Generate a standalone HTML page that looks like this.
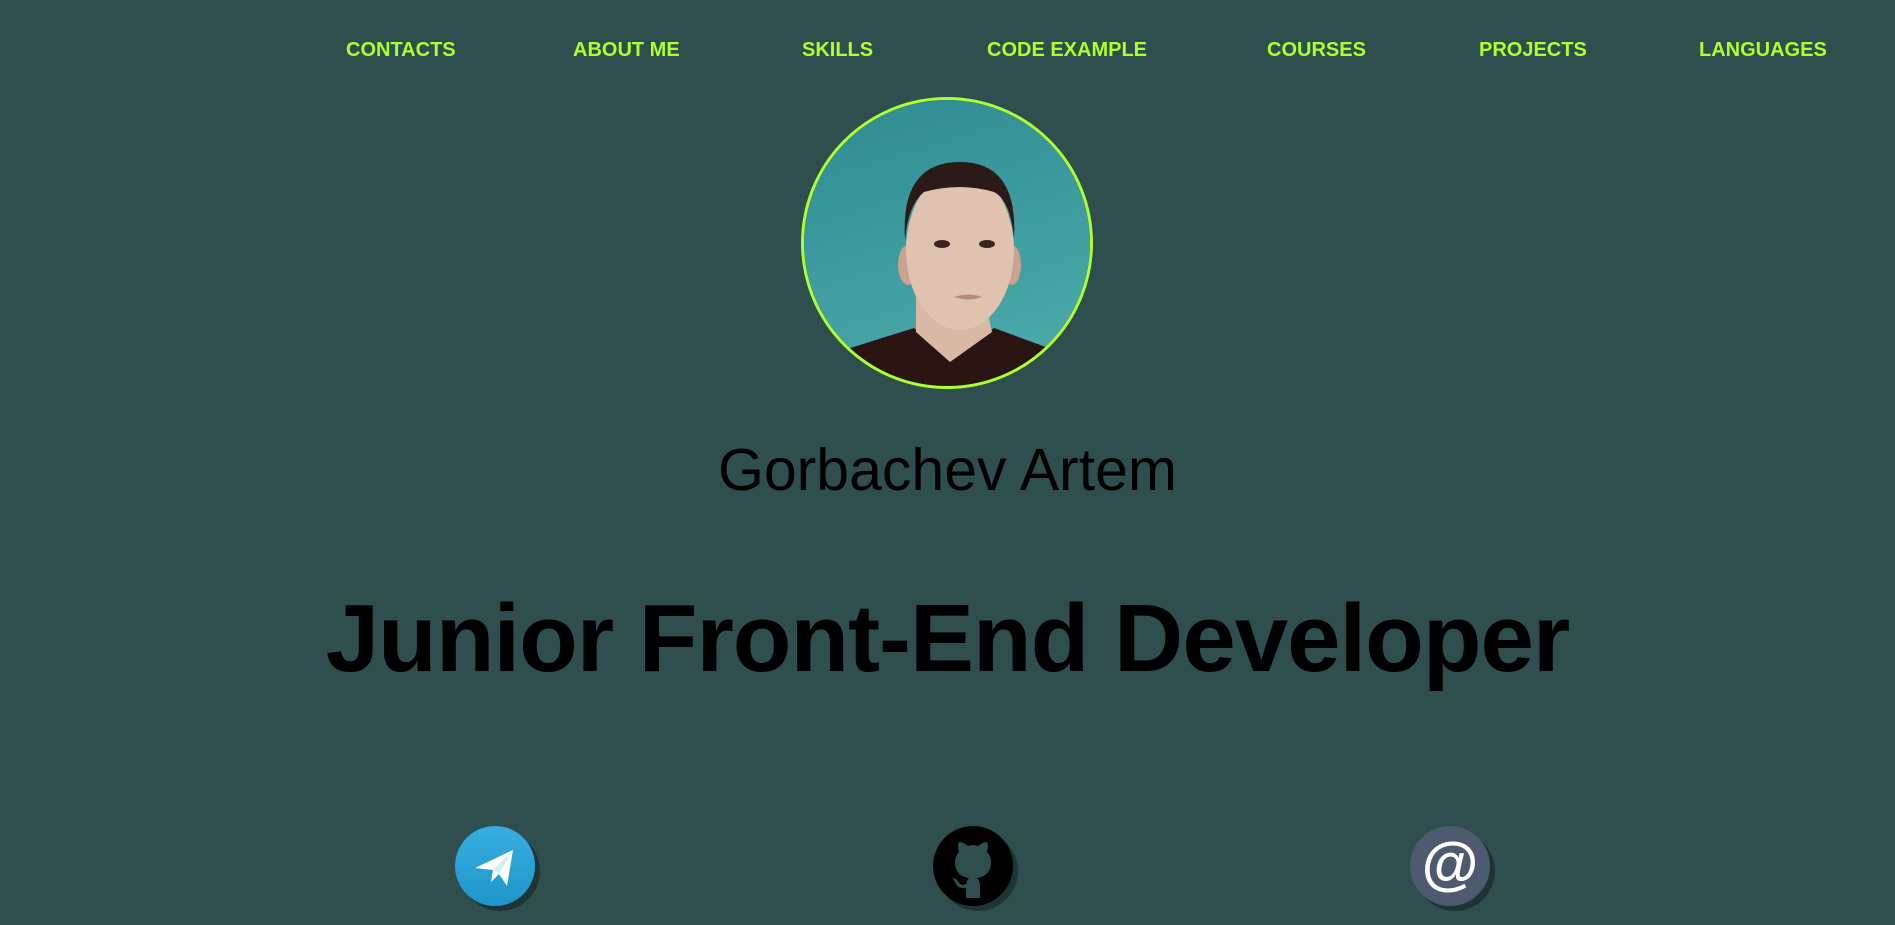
<!DOCTYPE html>
<html><head><meta charset="utf-8"><style>
body{margin:0;width:1895px;height:925px;background:#2f4f4f;overflow:hidden;font-family:"Liberation Sans",sans-serif;position:relative}
.n{position:absolute;top:39px;color:#adff2f;font-weight:bold;font-size:20px;white-space:nowrap;transform-origin:left top}
.av{position:absolute;left:801px;top:97px;width:292px;height:292px;border-radius:50%;border:3px solid #adff2f;box-sizing:border-box;overflow:hidden}
.name{position:absolute;left:0;width:1895px;top:436px;text-align:center;font-size:59px;color:#000}
.title{position:absolute;left:0;width:1895px;top:584px;text-align:center;font-size:96px;font-weight:bold;color:#000;letter-spacing:-1px}
.ic{position:absolute;top:826px;width:80px;height:80px;border-radius:50%;box-shadow:5px 5px 0 #1f3535}
</style></head><body>
<div class="n" style="left:346px">CONTACTS</div>
<div class="n" style="left:573px">ABOUT ME</div>
<div class="n" style="left:802px">SKILLS</div>
<div class="n" style="left:987px">CODE EXAMPLE</div>
<div class="n" style="left:1267px">COURSES</div>
<div class="n" style="left:1479px">PROJECTS</div>
<div class="n" style="left:1699px">LANGUAGES</div>
<div class="av"><svg width="292" height="292" viewBox="0 0 292 292">
<defs><linearGradient id="g" x1="0" y1="0" x2="0.3" y2="1"><stop offset="0" stop-color="#2e8b92"/><stop offset="1" stop-color="#4aa8a8"/></linearGradient></defs>
<rect width="292" height="292" fill="url(#g)"/>
<path d="M20 292 L40 250 L110 228 L146 260 L190 228 L250 250 L275 292Z" fill="#2a1512"/>
<path d="M112 195 L112 232 L146 262 L188 232 L180 195Z" fill="#d9b9a6"/>
<ellipse cx="104" cy="165" rx="10" ry="20" fill="#c9a290"/>
<ellipse cx="208" cy="165" rx="9" ry="20" fill="#c9a290"/>
<ellipse cx="156" cy="150" rx="54" ry="80" fill="#e0c2b0"/>
<path d="M101 140 Q96 62 156 62 Q214 62 210 138 Q206 100 190 92 Q156 82 120 92 Q104 105 101 140Z" fill="#2b1a18"/>
<ellipse cx="138" cy="144" rx="8" ry="4" fill="#3a2520"/><ellipse cx="183" cy="144" rx="8" ry="4" fill="#3a2520"/>
<path d="M150 197 Q165 192 178 197 Q165 202 150 197Z" fill="#b98a80"/>
</svg></div>
<div class="name">Gorbachev Artem</div>
<div class="title">Junior Front-End Developer</div>
<div class="ic" style="left:455px;background:linear-gradient(#37aee2,#1e96c8)"><svg width="80" height="80" viewBox="0 0 80 80"><path d="M20 42 L58 24 L52 60 L44 48 L36 56 L38 44Z" fill="#fff"/><path d="M38 44 L58 24 L44 48Z" fill="#d4ecf8"/></svg></div>
<div class="ic" style="left:933px;background:#000"><svg width="80" height="80" viewBox="0 0 80 80"><path d="M33 72 L33 62 Q24 63 22 56 Q20 52 18 52 Q24 52 26 57 Q29 60 33 58 Q34 54 36 52 Q22 50 22 36 Q22 30 26 26 Q24 20 26 16 Q30 16 35 20 Q40 18 45 20 Q50 16 54 16 Q56 20 54 26 Q58 30 58 36 Q58 50 44 52 Q47 55 47 60 L47 72Z" fill="#2f4f4f"/></svg></div>
<div class="ic" style="left:1410px;background:#4e5a70"><svg width="80" height="80" viewBox="0 0 80 80"><text x="40" y="57" text-anchor="middle" font-family="Liberation Sans" font-weight="bold" font-size="58" fill="#fff">@</text></svg></div>
</body></html>
